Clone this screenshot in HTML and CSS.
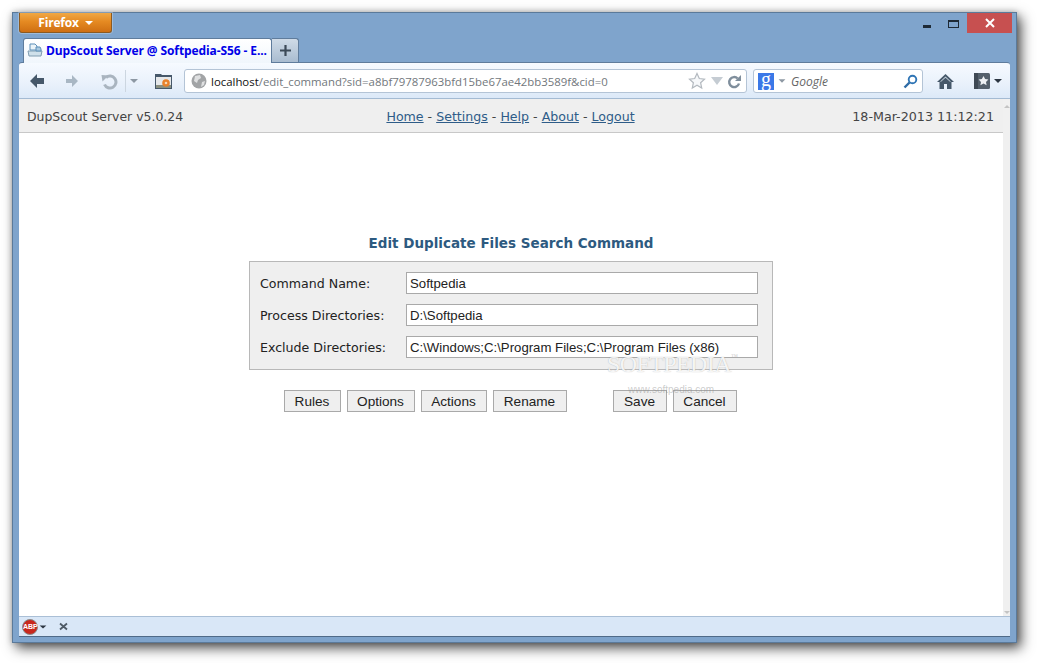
FILE: index.html
```html
<!DOCTYPE html>
<html lang="en">
<head>
<meta charset="utf-8">
<title>DupScout Server</title>
<link rel="stylesheet" href="styles.css">
</head>
<body>
<div class="window">
  <div class="titlebar">
    <div class="ff-button">Firefox <span class="ff-caret"></span></div>
    <div class="controls">
      <span class="ctl-min"></span>
      <span class="ctl-max"></span>
      <span class="ctl-close"><svg width="12" height="12" viewBox="0 0 12 12"><path d="M2 2l8 8M10 2l-8 8" stroke="#fff" stroke-width="2"/></svg></span>
    </div>
  </div>
  <div class="tabstrip">
    <div class="tab">
      <svg class="tab-icon" width="16" height="16" viewBox="0 0 16 16"><path d="M1 9h14l-1 5H2z" fill="#cfe0ea" stroke="#7f9cb0"/><path d="M3 8V2h5l2 2v4z" fill="#eaf3f8" stroke="#5d8fb8"/><path d="M9 9V5h4l1 2v2z" fill="#a9c9e0" stroke="#5d8fb8"/></svg>
      <span class="tab-title">DupScout Server @ Softpedia-S56 - E...</span>
    </div>
    <div class="newtab"><svg width="13" height="13" viewBox="0 0 13 13"><path d="M6.5 1v11M1 6.5h11" stroke="#3c4a58" stroke-width="2.2"/></svg></div>
  </div>
  <div class="browser">
    <div class="toolbar">
      <svg class="tb-back" width="16" height="16" viewBox="0 0 16 16"><path d="M8 1L1 8l7 7V11h7V5H8z" fill="#46586a"/></svg>
      <svg class="tb-fwd" width="16" height="16" viewBox="0 0 16 16"><path d="M8 2l6 6-6 6v-4H2V6h6z" fill="#a9b7c4"/></svg>
      <svg class="tb-undo" width="18" height="18" viewBox="0 0 18 18"><path d="M6 5.5a6 6 0 1 1-1.500 7" fill="none" stroke="#a9b4bf" stroke-width="3"/><path d="M1.500 3l7 .5-6 6z" fill="#a9b4bf"/></svg>
      <span class="tb-sep"></span>
      <span class="caret caret-grey tb-drop"></span>
      <svg class="tb-app" width="17" height="16" viewBox="0 0 17 16"><path d="M0 1h6l1 1h10v14H0z" fill="#46586a"/><rect x="1" y="4" width="15" height="11" fill="#e6e8ea"/><rect x="1" y="12" width="15" height="3" fill="#8a8f80"/><circle cx="11" cy="10" r="3.800" fill="#e8812b"/><circle cx="11" cy="10" r="1.300" fill="#f6d8b4"/></svg>
      <div class="urlbar">
        <svg class="globe" width="16" height="16" viewBox="0 0 16 16"><circle cx="8" cy="8" r="7.500" fill="#a2a4a6"/><path d="M4 3l5-1 1 3-3 2-1 3-3-2zM11 9l3-1-1 4-3 2z" fill="#dfe0e1"/></svg>
        <span class="url"><span class="url-host">localhost</span>/edit_command?sid=a8bf79787963bfd15be67ae42bb3589f&amp;cid=0</span>
        <svg class="star" width="18" height="18" viewBox="0 0 18 18"><path d="M9 1.500l2.300 5 5.200.6-3.900 3.600 1.100 5.300L9 13.300 4.300 16l1.100-5.300L1.500 7.100l5.200-.6z" fill="#f6f8fa" stroke="#b3b9bf" stroke-width="1.200"/></svg>
        <span class="caret-big"></span>
        <svg class="reload" width="15" height="15" viewBox="0 0 15 15"><path d="M12 9.500a5 5 0 1 1-1.300-5" fill="none" stroke="#7f8e9c" stroke-width="2.400"/><path d="M14 1v6H8z" fill="#7f8e9c"/></svg>
      </div>
      <div class="searchbar">
        <span class="g-icon">g</span>
        <span class="caret caret-grey g-drop"></span>
        <span class="search-text">Google</span>
        <svg class="mag" width="15" height="15" viewBox="0 0 15 15"><circle cx="9.500" cy="5.500" r="3.800" fill="none" stroke="#2f75b5" stroke-width="1.900"/><path d="M6.500 8.500L1.500 13.500" stroke="#2f6ca6" stroke-width="2.400"/></svg>
      </div>
      <svg class="home" width="17" height="15" viewBox="0 0 17 15"><path d="M8.500 0L0 8h2.500v7H7v-5h3v5h4.500V8H17z" fill="#46586a"/><path d="M8.500 2.500L3 7.800h1L8.500 3.800 13 7.800h1z" fill="#c8d4de"/></svg>
      <div class="bm">
        <svg width="16" height="16" viewBox="0 0 16 16"><rect width="16" height="16" rx="1.500" fill="#54606c"/><rect width="4" height="16" fill="#3f4a55"/><path d="M9.500 3l1.600 3.100 3.300.5-2.400 2.300.6 3.300-3.100-1.600-3.100 1.600.6-3.300-2.400-2.300 3.300-.5z" fill="#eef1f4"/></svg>
        <span class="caret caret-dark"></span>
      </div>
    </div>
    <div class="viewport">
      <div class="page">
        <div class="topnav">
          <span class="brand">DupScout Server v5.0.24</span>
          <span class="links"><a href="#">Home</a> - <a href="#">Settings</a> - <a href="#">Help</a> - <a href="#">About</a> - <a href="#">Logout</a></span>
          <span class="clock">18-Mar-2013 11:12:21</span>
        </div>
        <div class="content">
          <h1 class="heading">Edit Duplicate Files Search Command</h1>
          <form class="formbox">
            <label class="lbl" for="f1">Command Name:</label>
            <input class="field" id="f1" value="Softpedia">
            <label class="lbl" for="f2">Process Directories:</label>
            <input class="field" id="f2" value="D:\Softpedia">
            <label class="lbl" for="f3">Exclude Directories:</label>
            <input class="field" id="f3" value="C:\Windows;C:\Program Files;C:\Program Files (x86)">
          </form>
          <div class="actions">
            <button class="btn btn-rules" type="button">Rules</button>
            <button class="btn btn-options" type="button">Options</button>
            <button class="btn btn-actions" type="button">Actions</button>
            <button class="btn btn-rename" type="button">Rename</button>
            <button class="btn btn-save" type="button">Save</button>
            <button class="btn btn-cancel" type="button">Cancel</button>
          </div>
          <div class="wm">SOFTPEDIA<sup class="wm-tm">™</sup></div>
          <div class="wm-url">www.softpedia.com</div>
        </div>
      </div>
      <div class="scrollbar">
        <span class="sb-up"></span>
        <span class="sb-down"></span>
      </div>
    </div>
    <div class="statusbar">
      <span class="abp">ABP</span>
      <span class="caret caret-dark abp-drop"></span>
      <svg class="status-x" width="9" height="9" viewBox="0 0 9 9"><path d="M1 1.500l7 6M8 1.500l-7 6" stroke="#4e5a66" stroke-width="1.800"/></svg>
    </div>
  </div>
</div>
</body>
</html>
```
FILE: styles.css
```css
* { box-sizing: border-box; }
html, body { margin: 0; height: 100%; background: #fff; overflow: hidden; }
body { padding: 12px 20px 20px 12px; }

.window {
  width: 1005px;
  height: 631px;
  background: #7fa4cc;
  border: 1px solid #5b7a9a;
  box-shadow: 4px 5px 12px rgba(0,0,0,.7), 0 0 6px rgba(0,0,0,.2);
  padding: 0 6px 5px 6px;
  display: flex;
  flex-direction: column;
}

.titlebar { height: 25px; display: flex; justify-content: space-between; align-items: flex-start; flex: none; }
.ff-button {
  width: 93px; height: 20px;
  background: linear-gradient(#f0a844, #e58a22 45%, #cf6f12);
  border: 1px solid #8c5a20; border-top: 0;
  border-radius: 0 0 3px 3px;
  box-shadow: 0 0 0 1px rgba(255,255,255,.25);
  color: #fff; font: bold 12px "Open Sans", sans-serif; letter-spacing: -.2px;
  display: flex; align-items: center; justify-content: center; gap: 6px;
}
.ff-caret { width: 0; height: 0; border: 4px solid transparent; border-top: 4px solid #fff; border-bottom: 0; }
.controls { display: flex; align-items: flex-start; margin-right: -2px; }
.ctl-min { width: 8px; height: 3px; background: #1e2a36; margin-top: 12px; margin-right: 17px; }
.ctl-max { width: 11px; height: 8px; border: 1px solid #1e2a36; border-top-width: 2px; margin-top: 7px; margin-right: 8px; }
.ctl-close { width: 45px; height: 20px; background: #c75050; display: flex; align-items: center; justify-content: center; }

.tabstrip { height: 24px; display: flex; padding-left: 4px; flex: none; }
.tab {
  width: 249px; height: 25px;
  background: linear-gradient(#fff, #f0f6fc);
  border: 1px solid #5f7c9c; border-bottom: 0;
  border-radius: 3px 3px 0 0;
  display: flex; align-items: center; gap: 3px; padding: 0 0 2px 3px;
  position: relative; z-index: 1;
}
.tab-title { font: bold 12px "Open Sans", sans-serif; color: #0000e8; white-space: nowrap; letter-spacing: -.1px; }
.newtab {
  width: 27px; height: 24px;
  background: linear-gradient(#cfdbe7, #a9bcd0);
  border: 1px solid #5f7c9c; border-bottom: 0; border-left: 0;
  border-radius: 0 3px 0 0;
  display: flex; align-items: center; justify-content: center;
}

.browser { flex: 1; display: flex; flex-direction: column; min-height: 0; border-bottom: 1px solid #4f6a88; }
.toolbar {
  height: 37px; flex: none;
  background: linear-gradient(#f6faff, #e9f1fb 60%, #dce9f8);
  border-top: 1px solid #5f7c9c; border-bottom: 1px solid #a4bbd3;
  border-radius: 3px 3px 0 0;
  display: flex; align-items: center;
  padding-top: 1px;
}
.tb-back { margin-left: 10px; }
.tb-fwd { margin-left: 19px; }
.tb-undo { margin-left: 20px; }
.tb-sep { width: 1px; height: 22px; background: #ccd6e0; margin-left: 7px; }
.tb-drop { margin-left: 4px; }
.tb-app { margin-left: 17px; }
.caret { width: 0; height: 0; border-left: 4px solid transparent; border-right: 4px solid transparent; border-top: 4px solid; display: inline-block; }
.caret-grey { border-top-color: #8d98a3; }
.caret-dark { border-top-color: #2c3642; }

.urlbar {
  width: 563px; height: 24px; margin-left: 12px;
  background: #fff; border: 1px solid #b4c4d6; border-radius: 3px;
  display: flex; align-items: center; padding-left: 6px;
}
.url { font: 11.4px "Open Sans", sans-serif; color: #72777c; margin-left: 4px; flex: 1; white-space: nowrap; }
.url-host { color: #111; }
.star { margin-right: 1px; }
.caret-big { width: 0; height: 0; border-left: 6px solid transparent; border-right: 6px solid transparent; border-top: 8px solid #c5ccd3; margin-left: 4px; }
.reload { margin-left: 4px; margin-right: 4px; }

.searchbar {
  width: 170px; height: 24px; margin-left: 6px;
  background: #fff; border: 1px solid #b4c4d6; border-radius: 3px;
  display: flex; align-items: center; padding-left: 4px;
}
.g-icon {
  width: 16px; height: 17px; background: #3b78e7; color: #fff;
  font: 20px/13px "Liberation Serif", serif; text-align: center;
  display: block;
}
.g-drop { margin-left: 4px; transform: scale(.85); }
.search-text { font: italic 12px "Open Sans", sans-serif; color: #666; margin-left: 5px; flex: 1; }
.mag { margin-right: 4px; }
.home { margin-left: 14px; }
.bm { display: flex; align-items: center; gap: 4px; margin-left: 20px; }

.viewport { flex: 1; display: flex; min-height: 0; background: #fff; }
.page { flex: 1; display: flex; flex-direction: column; }
.topnav {
  height: 34px; flex: none;
  background: #efefef; border-bottom: 1px solid #c8c8c8;
  display: grid; grid-template-columns: 1fr auto 1fr;
  align-items: center; padding: 1px 9px 0 8px;
  font: 12.6px "DejaVu Sans", Verdana, sans-serif; color: #444;
}
.topnav a { color: #2e5c88; }
.brand { font-size: 12.45px; }
.links { color: #444; }
.clock { text-align: right; font-size: 12.7px; }
.content { flex: 1; position: relative; display: flex; flex-direction: column; align-items: center; padding-top: 100px; }
.heading { margin: 0 0 8px; height: 20px; font: bold 13.5px/20px "DejaVu Sans", Verdana, sans-serif; color: #2d5a80; }
.formbox {
  width: 524px; height: 109px;
  background: #efefef; border: 1px solid #b8b8b8;
  display: grid; grid-template-columns: 146px 352px;
  grid-auto-rows: 22px; row-gap: 10px;
  align-items: center; padding: 10px 0 0 10px;
}
.lbl { font: 12.6px "DejaVu Sans", Verdana, sans-serif; color: #222; }
.field {
  height: 22px; width: 352px; padding: 0 3px; background: #fff;
  border: 1px solid #a9a9a9; border-radius: 0; outline: 0;
  font: 13.2px "Liberation Sans", Arial, sans-serif; color: #222;
}
.actions { display: flex; margin-top: 20px; margin-right: 2px; width: 453px; }
.btn {
  height: 22px; padding: 0; background: #efefef;
  border: 1px solid #a9a9a9; border-radius: 0;
  font: 13.6px "Liberation Sans", Arial, sans-serif; color: #222;
}
.btn-rules { width: 57px; }
.btn-options { width: 68px; margin-left: 6px; }
.btn-actions { width: 66px; margin-left: 6px; }
.btn-rename { width: 74px; margin-left: 6px; }
.btn-save { width: 54px; margin-left: 46px; }
.btn-cancel { width: 64px; margin-left: 6px; }
.wm {
  position: absolute; left: 588px; top: 217px;
  font: 24px "Liberation Serif", serif; letter-spacing: -.6px;
  color: rgba(255,255,255,.9);
  text-shadow: 0 0 1px rgba(120,120,120,.6);
  line-height: 28px; pointer-events: none;
}
.wm-tm { font-size: 7px; vertical-align: top; line-height: 14px; color: #ccc; text-shadow: none; }
.wm-url {
  position: absolute; left: 609px; top: 250px;
  font: 10px/13px "Liberation Sans", Arial, sans-serif;
  color: rgba(140,140,140,.45); pointer-events: none;
}
.scrollbar { width: 7px; background: #f0f0f0; display: flex; flex-direction: column; justify-content: space-between; align-items: center; padding: 6px 0 2px; flex: none; }
.sb-up { width: 0; height: 0; border-left: 3px solid transparent; border-right: 3px solid transparent; border-bottom: 3px solid #c4c4c4; }
.sb-down { width: 0; height: 0; border-left: 3px solid transparent; border-right: 3px solid transparent; border-top: 3px solid #c4c4c4; }

.statusbar {
  height: 20px; flex: none;
  background: #d9e7f7; border-top: 1px solid #aabfd6;
  display: flex; align-items: center; padding-left: 3px;
}
.abp {
  width: 16px; height: 16px; border-radius: 50%;
  background: #c8281e; border: 1px solid #8a8a8a; color: #fff;
  font: bold 7px/14px "Liberation Sans", Arial, sans-serif; text-align: center;
}
.abp-drop { margin-left: 1px; transform: scale(.85,.8); }
.status-x { margin-left: 12px; }
```
